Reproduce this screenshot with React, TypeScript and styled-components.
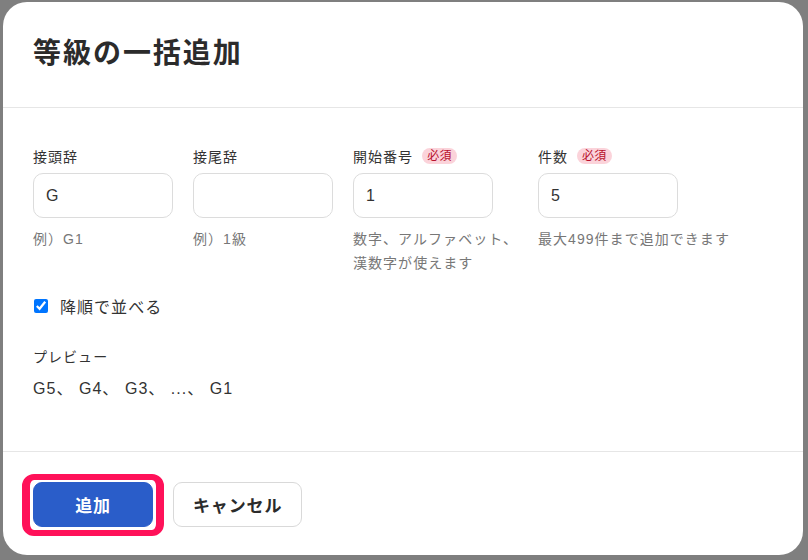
import React from "react";
import styled, { createGlobalStyle } from "styled-components";

const GlobalStyle = createGlobalStyle`
  html, body {
    margin: 0;
    padding: 0;
    background: #7f7f7f;
    width: 808px;
    height: 560px;
    overflow: hidden;
  }
  body {
    font-family: "Liberation Sans", "Noto Sans CJK JP", sans-serif;
    color: #333;
    letter-spacing: 0.065em;
  }
  * { box-sizing: border-box; }
`;

const Backdrop = styled.div`
  width: 808px;
  height: 560px;
  padding: 2px 0 0 3px;
`;

const Dialog = styled.div`
  width: 800px;
  height: 553px;
  background: #fff;
  border-radius: 24px;
  display: flex;
  flex-direction: column;
  overflow: hidden;
`;

const Header = styled.header`
  padding: 29px 30px 31px;
  border-bottom: 1px solid #e6e6e6;
`;

const Title = styled.h1`
  margin: 0;
  font-size: 28px;
  line-height: 45px;
  font-weight: 700;
  color: #2b2b2b;
  letter-spacing: 0.07em;
`;

const Body = styled.div`
  flex: 1;
  padding: 36px 30px 0;
`;

const Fields = styled.div`
  display: grid;
  grid-template-columns: 140px 140px 165px auto;
  column-gap: 20px;
`;

const Field = styled.div`
  display: flex;
  flex-direction: column;
`;

const LabelRow = styled.div`
  display: flex;
  align-items: center;
  gap: 9px;
  height: 24px;
  margin-bottom: 5px;
`;

const Label = styled.span`
  font-size: 14px;
  color: #333;
`;

const Badge = styled.span`
  display: inline-flex;
  align-items: center;
  height: 16px;
  padding: 0 5px;
  border-radius: 8px;
  background: #fbd3da;
  color: #b8102c;
  font-size: 12px;
  line-height: 16px;
  letter-spacing: 0.02em;
`;

const Input = styled.input`
  width: 140px;
  height: 45px;
  border: 1px solid #dcdcdc;
  border-radius: 10px;
  padding: 0 12px;
  font-family: "Liberation Sans", "Noto Sans CJK JP", sans-serif;
  font-size: 16px;
  color: #333;
  outline: none;
`;

const Help = styled.p`
  margin: 9px 0 0;
  font-size: 14px;
  line-height: 24px;
  color: #777;
  white-space: nowrap;
`;

const CheckRow = styled.label`
  display: flex;
  align-items: center;
  gap: 12px;
  margin-top: 19px;
  height: 24px;
  font-size: 16px;
  color: #333;
`;

const Check = styled.input`
  width: 14px;
  height: 14px;
  margin: 0 0 0 1px;
`;

const PreviewLabel = styled.div`
  margin-top: 29px;
  font-size: 14px;
  line-height: 21px;
  color: #333;
`;

const PreviewValue = styled.div`
  margin-top: 9px;
  font-size: 16px;
  line-height: 24px;
  color: #333;
`;

const Footer = styled.footer`
  border-top: 1px solid #e6e6e6;
  padding: 30px 30px 28px;
  display: flex;
  align-items: center;
  gap: 20px;
`;

const Highlight = styled.span`
  position: relative;
  display: inline-flex;
  &::after {
    content: "";
    position: absolute;
    top: -8px;
    bottom: -9px;
    left: -11px;
    right: -11px;
    border: solid #ff1159;
    border-width: 6px 8px;
    border-radius: 12px;
    pointer-events: none;
  }
`;

const Button = styled.button<{ $primary?: boolean }>`
  height: 45px;
  min-width: 120px;
  padding: 0 19px;
  border-radius: 9px;
  font-family: "Liberation Sans", "Noto Sans CJK JP", sans-serif;
  font-size: 17px;
  font-weight: 700;
  letter-spacing: 0.05em;
  cursor: pointer;
  border: 1px solid ${(p) => (p.$primary ? "#2a5dc9" : "#d9d9d9")};
  background: ${(p) => (p.$primary ? "#2a5dc9" : "#fff")};
  color: ${(p) => (p.$primary ? "#fff" : "#2b2b2b")};
`;

export default function App() {
  return (
    <>
      <GlobalStyle />
      <Backdrop>
        <Dialog>
          <Header>
            <Title>等級の一括追加</Title>
          </Header>
          <Body>
            <Fields>
              <Field>
                <LabelRow>
                  <Label>接頭辞</Label>
                </LabelRow>
                <Input defaultValue="G" />
                <Help>例）G1</Help>
              </Field>
              <Field>
                <LabelRow>
                  <Label>接尾辞</Label>
                </LabelRow>
                <Input defaultValue="" />
                <Help>例）1級</Help>
              </Field>
              <Field>
                <LabelRow>
                  <Label>開始番号</Label>
                  <Badge>必須</Badge>
                </LabelRow>
                <Input defaultValue="1" />
                <Help>
                  数字、アルファベット、
                  <br />
                  漢数字が使えます
                </Help>
              </Field>
              <Field>
                <LabelRow>
                  <Label>件数</Label>
                  <Badge>必須</Badge>
                </LabelRow>
                <Input defaultValue="5" />
                <Help>最大499件まで追加できます</Help>
              </Field>
            </Fields>
            <CheckRow>
              <Check type="checkbox" defaultChecked />
              降順で並べる
            </CheckRow>
            <PreviewLabel>プレビュー</PreviewLabel>
            <PreviewValue>G5、 G4、 G3、 ...、 G1</PreviewValue>
          </Body>
          <Footer>
            <Highlight>
              <Button $primary>追加</Button>
            </Highlight>
            <Button>キャンセル</Button>
          </Footer>
        </Dialog>
      </Backdrop>
    </>
  );
}
